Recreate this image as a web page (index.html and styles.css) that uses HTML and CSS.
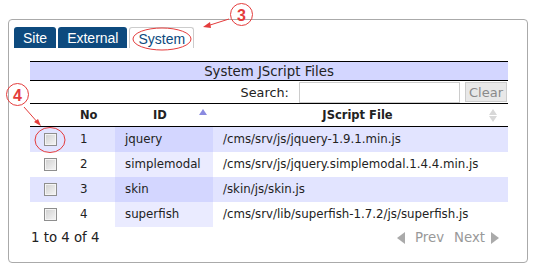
FILE: index.html
```html
<!DOCTYPE html>
<html>
  <head>
    <title>System JScript Files</title>
    <meta name="viewport" content="width=device-width, initial-scale=1" />
    <link rel="stylesheet" href="styles.css">
  </head>
  <body>
    <div class="panel">
      <div class="tabs">
        <span class="tab">Site</span>
        <span class="tab">External</span>
        <span class="tab active">System</span>
      </div>
      <table class="files">
        <thead>
          <tr class="caption"><th colspan="4">System JScript Files</th></tr>
          <tr class="search">
            <th colspan="4">
              <label>Search:</label>
              <input type="text" class="search-box" />
              <span class="clear">Clear</span>
            </th>
          </tr>
          <tr class="heads">
            <th class="c-check"></th>
            <th class="c-no">No</th>
            <th class="c-id">ID <span class="sort-up"></span></th>
            <th class="c-file">JScript File <span class="sort-both"><i class="up"></i><i class="down"></i></span></th>
          </tr>
        </thead>
        <tbody>
          <tr class="odd">
            <td class="c-check"><span class="check"></span></td>
            <td class="c-no">1</td>
            <td class="c-id">jquery</td>
            <td class="c-file">/cms/srv/js/jquery-1.9.1.min.js</td>
          </tr>
          <tr class="even">
            <td class="c-check"><span class="check"></span></td>
            <td class="c-no">2</td>
            <td class="c-id">simplemodal</td>
            <td class="c-file">/cms/srv/js/jquery.simplemodal.1.4.4.min.js</td>
          </tr>
          <tr class="odd">
            <td class="c-check"><span class="check"></span></td>
            <td class="c-no">3</td>
            <td class="c-id">skin</td>
            <td class="c-file">/skin/js/skin.js</td>
          </tr>
          <tr class="even">
            <td class="c-check"><span class="check"></span></td>
            <td class="c-no">4</td>
            <td class="c-id">superfish</td>
            <td class="c-file">/cms/srv/lib/superfish-1.7.2/js/superfish.js</td>
          </tr>
        </tbody>
      </table>
      <div class="footer">
        <span class="info">1 to 4 of 4</span>
        <span class="paging">
          <span class="arrow-left"></span>
          <span class="pg">Prev</span>
          <span class="pg">Next</span>
          <span class="arrow-right"></span>
        </span>
      </div>
    </div>

    <!-- callouts drawn over the screenshot -->
    <svg class="callouts" width="537" height="272" viewBox="0 0 537 272">
      <g fill="none" stroke="#e43c3c" stroke-width="1">
        <circle cx="241.5" cy="14.5" r="11" />
        <circle cx="17.5" cy="94.5" r="11" />
        <ellipse cx="162" cy="39" rx="29" ry="11" />
        <ellipse cx="50" cy="140" rx="15" ry="12.5" />
        <line x1="229" y1="19" x2="207" y2="26" />
        <line x1="24" y1="107" x2="39" y2="124" />
      </g>
      <g fill="#e43c3c">
        <polygon points="203,27 210,22 211,28" />
        <polygon points="41,126 34,122 38,119" />
        <text x="241.5" y="20.5" text-anchor="middle" class="num">3</text>
        <text x="17.5" y="100.5" text-anchor="middle" class="num">4</text>
      </g>
    </svg>
  </body>
</html>
```

FILE: styles.css
```css
html {
  font-family: "DejaVu Sans", Verdana, sans-serif;
  color: #222;
}
body {
  margin: 0;
  width: 537px;
  height: 272px;
  position: relative;
  background: #fff;
}
.panel {
  margin: 19px 9px 0 8px;
  height: 244px;
  border: 1px solid #aaa;
  border-radius: 4px;
  box-sizing: border-box;
  padding: 7px 0 0 5px;
}
.tabs {
  display: flex;
  gap: 2px;
  font-family: "Liberation Sans", Arial, sans-serif;
  font-size: 14px;
}
.tab {
  height: 21px;
  line-height: 22px;
  padding: 0 9px;
  background: #0d4a7e;
  color: #fff;
  border-radius: 3px 3px 0 0;
}
.tab.active {
  background: #fff;
  color: #0d4a7e;
  border: 1px solid #ccc;
  border-bottom: none;
  height: 20px;
  line-height: 22px;
  padding: 0 8px;
}
.files {
  margin: 13px 0 0 16px;
  width: 478px;
  border-collapse: collapse;
  font-size: 11px;
}
.files th,
.files td {
  box-sizing: border-box;
  padding: 0;
}
.files th {
  font-weight: normal;
}
.caption th {
  height: 19px;
  background: #d3d6ff;
  border-top: 1px solid #000;
  border-bottom: 1px solid #000;
  font-size: 13.3px;
  text-align: center;
}
.search th {
  height: 23px;
  text-align: right;
  font-size: 12.8px;
}
.search th > * {
  vertical-align: middle;
}
.search-box {
  width: 161px;
  height: 21px;
  margin: 0 0 0 6px;
  border: 1px solid #ccc;
  padding: 1px 2px;
  box-sizing: border-box;
}
.clear {
  display: inline-block;
  width: 42px;
  height: 20px;
  line-height: 20px;
  margin-left: 1px;
  margin-right: 1px;
  text-align: center;
  background: #e8e8e8;
  border: 1px solid #ccc;
  box-sizing: border-box;
  color: #8a8a8a;
  font-size: 13px;
}
.heads th {
  height: 23px;
  border-top: 1px solid #000;
  border-bottom: 1px solid #000;
  font-weight: bold;
  font-size: 11.5px;
  position: relative;
}
.heads .c-no {
  text-align: left;
  padding-left: 10px;
}
.heads .c-id {
  padding-right: 8px;
}
.heads .c-file {
  padding-right: 6px;
}
.sort-up {
  position: absolute;
  top: 5px;
  left: 84px;
  border-left: 4px solid transparent;
  border-right: 4px solid transparent;
  border-bottom: 6px solid #8a8ae0;
}
.sort-both {
  position: absolute;
  top: 5px;
  right: 11px;
  display: flex;
  flex-direction: column;
  gap: 1px;
}
.sort-both i {
  border-left: 4px solid transparent;
  border-right: 4px solid transparent;
}
.sort-both .up {
  border-bottom: 6px solid #d8d8d8;
}
.sort-both .down {
  border-top: 6px solid #d8d8d8;
}
.c-check {
  width: 40px;
}
.c-no {
  width: 45px;
}
.c-id {
  width: 98px;
}
.files td {
  height: 25px;
  padding-left: 10px;
  font-size: 11.8px;
  color: #222;
}
.files td.c-check {
  padding-left: 14px;
}
.odd td {
  background: #e2e4ff;
}
.odd td.c-id {
  background: #d3d6ff;
}
.even td.c-id {
  background: #eaebff;
}
.check {
  display: block;
  width: 11px;
  height: 11px;
  border: 1px solid #8e8e8e;
  background: linear-gradient(135deg, #cfcfcf, #f6f6f6);
  box-shadow: inset 0 0 0 1px #f4f4f4;
}
.footer {
  display: flex;
  justify-content: space-between;
  align-items: center;
  margin: 1px 0 0 17px;
  width: 478px;
  height: 20px;
  font-size: 13.3px;
}
.paging {
  display: flex;
  align-items: center;
  gap: 8px;
  color: #999;
  padding-right: 10px;
}
.pg {
  margin-left: 2px;
}
.arrow-left {
  border-top: 6px solid transparent;
  border-bottom: 6px solid transparent;
  border-right: 8px solid #aaa;
}
.arrow-right {
  border-top: 6px solid transparent;
  border-bottom: 6px solid transparent;
  border-left: 8px solid #aaa;
  margin-left: -2px;
}
.callouts {
  position: absolute;
  top: 0;
  left: 0;
  pointer-events: none;
}
.num {
  font-family: "Liberation Sans", Arial, sans-serif;
  font-weight: bold;
  font-size: 16px;
}
```
